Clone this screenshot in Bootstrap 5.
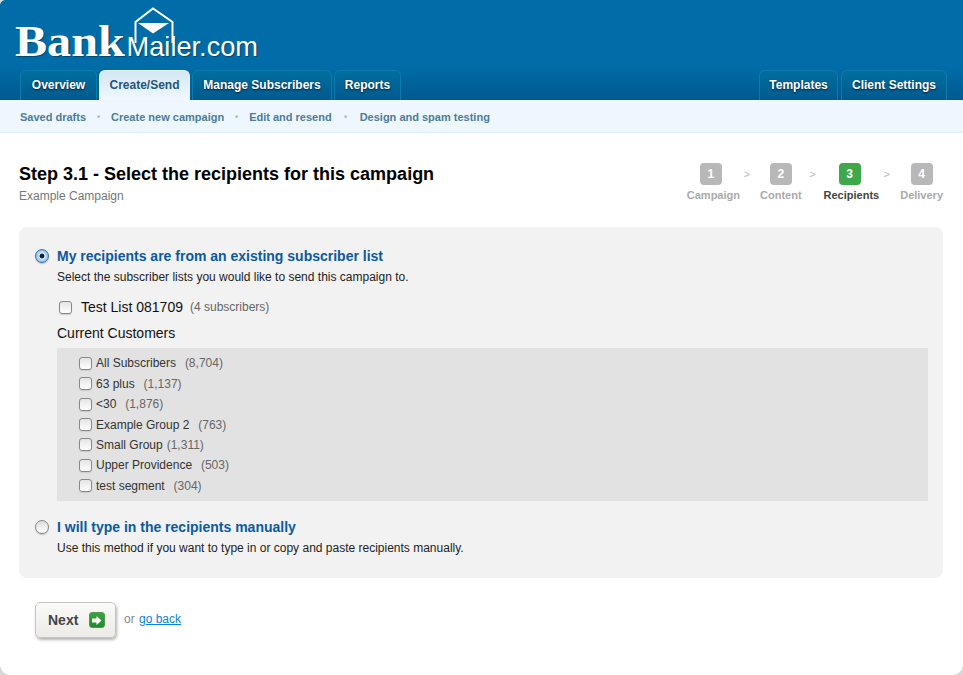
<!DOCTYPE html>
<html lang="en"><head><meta charset="utf-8"><title>BankMailer</title>
<link href="https://cdn.jsdelivr.net/npm/bootstrap@5.3.0/dist/css/bootstrap.min.css" rel="stylesheet">
<style>
html,body{height:100%}
body{background:#fff;font-family:"Liberation Sans",Arial,sans-serif;color:#222;font-size:12px;height:675px;overflow:hidden;position:relative}
.corner-tl,.corner-bl,.corner-br{position:absolute;width:10px;height:10px}
.corner-bl{left:0;bottom:0;background:radial-gradient(circle at 100% 0,transparent 9.5px,#d8d8d8 10px)}
.corner-br{right:0;bottom:0;background:radial-gradient(circle at 0 0,transparent 9.5px,#d8d8d8 10px)}
.corner-tl{left:0;top:0;background:radial-gradient(circle at 100% 100%,transparent 4.5px,#cfdbe3 5px);width:5px;height:5px}
.hdr{height:100px;background:linear-gradient(#006da8 0,#006da8 66px,#00598f 100px);padding:0 16px 0 20px}
.logo{height:70px;position:relative;color:#fff}
.logo-in{position:absolute;left:-5px;top:19px;line-height:1;white-space:nowrap;text-shadow:1px 1px 1px rgba(0,0,0,.35)}
.logo-b{display:inline-block;font-family:"Liberation Serif",serif;font-weight:700;font-size:45px;transform:scaleX(1.07);transform-origin:0 50%;margin-right:8px}
.logo-m{font-size:27.2px;margin-left:1px}
.logo-env{position:absolute;left:114px;top:7px}
.tabx{height:30px;display:flex;gap:2px}
.tabx a{display:block;height:30px;text-align:center;line-height:29px;font-weight:700;font-size:12px;color:#fff;text-decoration:none;border-radius:6px 6px 0 0;background:linear-gradient(#006f9f,#00598f);border:1px solid #0a7cab;border-bottom:0;text-shadow:0 1px 2px rgba(0,0,0,.7)}
.tabx a.on{background:linear-gradient(#d3e7f4,#f0f8fe);color:#1f5577;border-color:#e8f3fa;text-shadow:none}
.tw-1{width:77px}.tw-2{width:91px}.tw-3{width:140px}.tw-4{width:67px}.tw-5{width:79px;margin-right:1px}.tw-6{width:106px}
.subn{height:33px;background:#eff7fe;border-bottom:1px solid #dcecf8;padding:1px 20px 0;line-height:33px;display:flex;font-size:11px;font-weight:700;color:#4d7c98}
.subn i{font-style:normal;color:#a8b8c4;width:25px;text-align:center;font-size:9px}
.subn i.wide{width:28px}
.st-title{font-size:18px;font-weight:700;color:#000;line-height:22px;margin-top:1px}
.st-sub{font-size:12px;color:#777;line-height:16px;margin-top:3px}
.stepx{display:flex;margin-top:1px}
.st-i{text-align:center;font-size:11px;font-weight:700;color:#aaa;line-height:14px}
.st-n{width:22px;height:22px;border-radius:4px;background:#b8b8b8;color:#fff;line-height:22px;font-size:12px;margin:0 auto 3px}
.st-n.lf1{margin-left:13px}.st-n.lf3{margin-left:15px}
.st-i.on{color:#444}.st-i.on .st-n{background:#3fa849}
.st-g{color:#bbb;font-size:11px;line-height:22px;font-weight:400;width:20px;padding-right:6px;text-align:center}
.st-g.w2{width:22px;padding-right:0}.st-g.w3{width:21px}
.panelx{background:#f2f2f2;border-radius:8px;margin:0 20px 0 19px;height:351px;padding:18px 15px 0 15px}
.rad{display:flex;align-items:center;gap:8px;height:22px}
.rdo{width:14px;height:14px;border-radius:50%;border:1px solid #888;background:linear-gradient(#dcdcdc,#fff);flex:none;box-shadow:0 1px 1px #bbb;margin-left:1px}
.rdo.on{border-color:#3c74a6;background:radial-gradient(circle,#0e2336 0 2px,#d6ebfb 2.8px,#6fb0e6 7px)}
.rad b{font-size:14px;color:#0b5aa0}
.desc{margin:2px 0 0 23px;line-height:16px;font-size:12px;color:#222}
.chk{width:13px;height:13px;border:1px solid #888;border-radius:3px;background:linear-gradient(#e4e4e4,#fff);flex:none;box-shadow:0 1px 1px #ccc}
.ln1{display:flex;align-items:center;margin:12px 0 0 25px;height:20px;font-size:14px;color:#111}
.ln1 .chk{margin-right:9px}
.ln1 small{font-size:12px;color:#666;margin-left:7px}
.grp-t{margin:6px 0 0 23px;height:20px;line-height:20px;font-size:14px;color:#111}
.grp{margin:5px 0 0 23px;background:#e2e2e2;height:153px;padding:5px 0 0 22px}
.grp div{display:flex;align-items:center;gap:4px;height:20.45px;color:#333;font-size:12px}
.grp span{color:#666;margin-left:1.500px}
.grp span.tight{margin-left:0}
.btnx{display:inline-flex;align-items:center;gap:11px;width:81px;height:36px;border:1px solid #c5c5c0;border-radius:5px;background:linear-gradient(#fafaf8,#ecebe7);box-shadow:1px 2px 3px rgba(0,0,0,.3);padding:0 0 0 12px;font-weight:700;font-size:14px;color:#444}
.btn-ic{width:16px;height:16px;border-radius:3px;background:linear-gradient(#38a63f,#218a2b);border:1px solid #4c9a50;display:flex;align-items:center;justify-content:center}
.goz{color:#888;margin:-2px 0 0 8px}.goz a{color:#0a83d8;margin-left:1px}
</style></head><body>
<div class="hdr">
 <div class="logo"><div class="logo-in"><span class="logo-b">Bank</span><span class="logo-m">Mailer.com</span></div>
  <svg class="logo-env" width="40" height="38" viewBox="0 0 40 38"><path d="M1.500 36V15L19 1.500 38.500 15V36" fill="none" stroke="#fff" stroke-width="2"/><path d="M4 16H35L19 26.500Z" fill="#fff"/></svg>
 </div>
 <div class="d-flex justify-content-between">
  <nav class="tabx"><a href="#" class="tw-1">Overview</a><a href="#" class="on tw-2">Create/Send</a><a href="#" class="tw-3">Manage Subscribers</a><a href="#" class="tw-4">Reports</a></nav>
  <nav class="tabx"><a href="#" class="tw-5">Templates</a><a href="#" class="tw-6">Client Settings</a></nav>
 </div>
</div>
<div class="subn"><span>Saved drafts</span><i>•</i><span>Create new campaign</span><i>•</i><span>Edit and resend</span><i class="wide">•</i><span>Design and spam testing</span></div>
<div class="d-flex justify-content-between" style="padding:29px 20px 0 19px;height:94px">
 <div><div class="st-title">Step 3.1 - Select the recipients for this campaign</div><div class="st-sub">Example Campaign</div></div>
 <div class="stepx">
  <div class="st-i"><div class="st-n lf1">1</div>Campaign</div><div class="st-g">&gt;</div>
  <div class="st-i"><div class="st-n">2</div>Content</div><div class="st-g w2">&gt;</div>
  <div class="st-i on"><div class="st-n lf3">3</div>Recipients</div><div class="st-g w3">&gt;</div>
  <div class="st-i"><div class="st-n">4</div>Delivery</div>
 </div>
</div>
<div class="panelx">
 <div class="rad"><span class="rdo on"></span><b>My recipients are from an existing subscriber list</b></div>
 <p class="desc">Select the subscriber lists you would like to send this campaign to.</p>
 <div class="ln1"><span class="chk"></span>Test List 081709<small>(4 subscribers)</small></div>
 <div class="grp-t">Current Customers</div>
 <div class="grp">
  <div><b class="chk"></b>All Subscribers&nbsp; <span>(8,704)</span></div>
  <div><b class="chk"></b>63 plus&nbsp; <span>(1,137)</span></div>
  <div><b class="chk"></b>&lt;30&nbsp; <span>(1,876)</span></div>
  <div><b class="chk"></b>Example Group 2&nbsp; <span>(763)</span></div>
  <div><b class="chk"></b>Small Group <span class="tight">(1,311)</span></div>
  <div><b class="chk"></b>Upper Providence&nbsp; <span>(503)</span></div>
  <div><b class="chk"></b>test segment&nbsp; <span>(304)</span></div>
 </div>
 <div class="rad" style="margin-top:15px"><span class="rdo"></span><b>I will type in the recipients manually</b></div>
 <p class="desc">Use this method if you want to type in or copy and paste recipients manually.</p>
</div>
<div class="d-flex align-items-center" style="padding:24px 0 0 35px">
 <span class="btnx">Next <span class="btn-ic"><svg width="10" height="9" viewBox="0 0 10 9"><path d="M0 2.500H4.500V0L9.500 4.500 4.500 9V6.500H0Z" fill="#fff"/></svg></span></span>
 <span class="goz">or <a href="#">go back</a></span>
</div>
<div class="corner-tl"></div><div class="corner-bl"></div><div class="corner-br"></div>
</body></html>
